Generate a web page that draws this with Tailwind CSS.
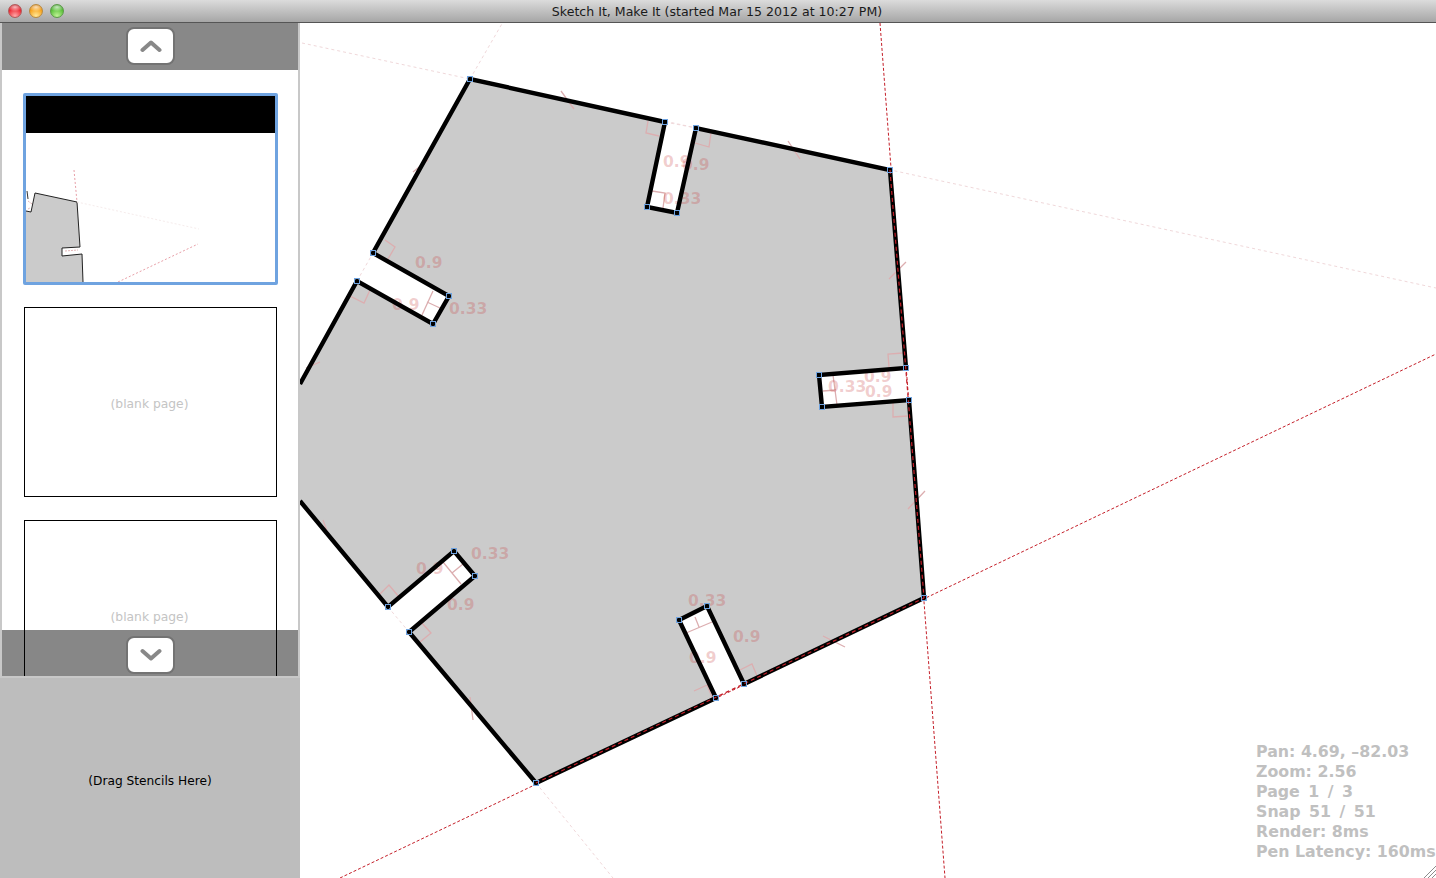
<!DOCTYPE html>
<html>
<head>
<meta charset="utf-8">
<script src="https://cdn.jsdelivr.net/npm/@tailwindcss/browser@4"></script>
</head>
<body class="m-0 overflow-hidden bg-white">
<div class="flex flex-col w-[1436px] h-[878px] overflow-hidden font-['DejaVu_Sans',sans-serif]">
  <!-- Title bar -->
  <div class="relative h-[23px] shrink-0 flex items-center justify-center bg-gradient-to-b from-[#dcdcdc] to-[#a6a6a6] border-b border-[#555555]">
    <div class="absolute left-[8px] top-[4px] flex gap-[7px]">
      <div class="w-[14px] h-[14px] rounded-full border border-[#b05a5a] bg-[radial-gradient(ellipse_60%_35%_at_50%_18%,#ffffffb0,#ffffff00),radial-gradient(circle_at_50%_90%,#ffa8a8,#ee2a34_60%,#b5101a)]"></div>
      <div class="w-[14px] h-[14px] rounded-full border border-[#b88a40] bg-[radial-gradient(ellipse_60%_35%_at_50%_18%,#ffffffb0,#ffffff00),radial-gradient(circle_at_50%_90%,#ffe898,#f7a41e_60%,#c8700c)]"></div>
      <div class="w-[14px] h-[14px] rounded-full border border-[#5c9a48] bg-[radial-gradient(ellipse_60%_35%_at_50%_18%,#ffffffb0,#ffffff00),radial-gradient(circle_at_50%_90%,#c0f296,#5cc13c_60%,#2f8a1e)]"></div>
    </div>
    <span class="text-[12.57px] leading-none text-[#1a1a1a] -ml-[2px] mt-[2px]">Sketch It, Make It (started Mar 15 2012 at 10:27 PM)</span>
  </div>

  <div class="flex flex-1 min-h-0">
    <!-- Sidebar -->
    <div class="w-[300px] shrink-0 flex flex-col bg-[#bdbdbd]">
      <div class="relative h-[655px] shrink-0 overflow-hidden bg-white border-x-2 border-b-2 border-[#c8c8c8]">
        <div class="flex flex-col gap-[23px] pl-[21px] pt-[70px]">
          <!-- Selected thumbnail -->
          <div class="w-[255px] h-[192px] shrink-0 border-[3px] border-[#6fa3e0] rounded-[2px] bg-white overflow-hidden">
            <div class="h-[37px] bg-black"></div>
            <svg class="block" width="249" height="149" viewBox="26 133 249 149">
              <path d="M26 282L83 282L82 254L62 256L62 248L80 247L77 202L35 193L31 212L26 211Z" fill="#cbcbcb"/>
              <path d="M26 211L31 212L35 193L77 202L80 247L62 248L62 256L82 254L83 282" fill="none" stroke="#222222" stroke-width="1"/>
              <path d="M27 191L28 199" stroke="#333333" stroke-width="1"/>
              <path d="M74 170L77 202" stroke="#e8a0a8" stroke-width="1" stroke-dasharray="2 2"/>
              <path d="M77 202L199 229" stroke="#f6ecec" stroke-width="1" stroke-dasharray="2 2"/>
              <path d="M118 282L198 244" stroke="#e8a0a8" stroke-width="1" stroke-dasharray="2 2"/>
              <path d="M65 251L78 250M28 201L32 204M28 209L30 208" stroke="#e3b6b8" stroke-width="1" stroke-dasharray="2 1"/>
            </svg>
          </div>
          <!-- Blank pages -->
          <div class="-mt-[1px] ml-[1px] w-[253px] h-[190px] shrink-0 border border-black flex items-center justify-center pt-[5px] pr-[2px]">
            <span class="text-[12.3px] text-[#c4c4c4]">(blank page)</span>
          </div>
          <div class="ml-[1px] w-[253px] h-[190px] shrink-0 border border-black flex items-center justify-center pt-[5px] pr-[2px]">
            <span class="text-[12.3px] text-[#c4c4c4]">(blank page)</span>
          </div>
        </div>
        <!-- Scroll up -->
        <div class="absolute left-0 right-0 top-0 h-[47px] bg-[#888888] flex items-center justify-center">
          <div class="w-[49px] h-[38px] -mt-[1px] ml-[1px] rounded-[8px] bg-white border-2 border-[#737373] flex items-center justify-center">
            <svg width="22" height="14" viewBox="0 0 22 14"><path d="M2.5 11L11 3.5L19.5 11" fill="none" stroke="#888888" stroke-width="4" stroke-linecap="round" stroke-linejoin="round"/></svg>
          </div>
        </div>
        <!-- Scroll down -->
        <div class="absolute left-0 right-0 bottom-0 h-[46px] bg-black/[.47] flex items-center justify-center">
          <div class="w-[49px] h-[38px] mt-[3px] ml-[1px] rounded-[8px] bg-white border-2 border-[#737373] flex items-center justify-center">
            <svg width="22" height="14" viewBox="0 0 22 14"><path d="M2.5 3L11 10.5L19.5 3" fill="none" stroke="#888888" stroke-width="4" stroke-linecap="round" stroke-linejoin="round"/></svg>
          </div>
        </div>
      </div>
      <div class="flex-1 flex items-center justify-center pt-[7px]">
        <span class="text-[12.2px] text-black">(Drag Stencils Here)</span>
      </div>
    </div>

    <!-- Canvas -->
    <div class="relative flex-1 overflow-hidden bg-white">
      <svg class="absolute inset-0" width="1136" height="855" viewBox="300 23 1136 855">
        <path fill="#cbcbcb" d="M470 79L665 122L647 207L677 213L696 128L890 170L906 368L819 375L822 407L909 400L924 598L744 684L707 606L679 620L716 698L536 783L409 632L475 576L454 551L388 607L300 501L300 384L357 281L433 324L449 296L373 253Z"/>

        <!-- Construction lines -->
        <g fill="none" stroke="#c41e28" stroke-width="1" stroke-dasharray="3 2">
          <path d="M880 23L945 878"/>
          <path d="M340 878L1436 354"/>
        </g>
        <g fill="none" stroke="#f0d8da" stroke-width="1" stroke-dasharray="3 3">
          <path d="M302 43L470 79L1436 288"/>
          <path d="M470 79L503 22"/>
          <path d="M536 783L613 878"/>
          <path d="M388 607L409 632"/>
          <path d="M357 281L373 253"/>
          <path d="M665 122L696 128"/>
        </g>

        <!-- Tick marks and right-angle markers -->
        <g fill="none" stroke="#dcaeb0" stroke-width="1.3">
          <path d="M561 91L574 109M788 141L800 159M889 279L906 262M908 509L925 491M823 636L845 647M615 746L637 737M470 697L473 720M323 520L327 531M306 368L320 362M413 172L428 160"/>
          <path d="M648 121L646 133L659 136M711 133L709 147L695 143M652 191L665 193L663 208"/>
          <path d="M385 240L395 247L388 259M350 296L364 303L370 290M422 315L433 291M427 302L440 308"/>
          <path d="M889 367L888 354L903 353M893 403L893 417L908 416M823 391L836 390M833 375L837 405"/>
          <path d="M380 594L389 585L399 597M420 642L431 633L421 622M443 562L461 584M452 573L463 564"/>
          <path d="M694 691L707 685L712 697M740 670L752 664L757 676M686 633L712 622M695 617L699 627"/>
        </g>

        <!-- Dimension labels -->
        <g class="font-['DejaVu_Sans',sans-serif] font-bold" font-size="15.5" fill="#c83c3c" fill-opacity="0.26">
          <text x="663" y="167">0.9</text><text x="682" y="170">0.9</text><text x="663" y="204">0.33</text>
          <text x="415" y="268">0.9</text><text x="392" y="310">0.9</text><text x="449" y="314">0.33</text>
          <text x="828" y="392">0.33</text><text x="864" y="382">0.9</text><text x="865" y="397">0.9</text>
          <text x="471" y="559">0.33</text><text x="416" y="574">0.9</text><text x="447" y="610">0.9</text>
          <text x="688" y="606">0.33</text><text x="733" y="642">0.9</text><text x="689" y="663">0.9</text>
        </g>

        <!-- Outline -->
        <g fill="none" stroke="#000000" stroke-width="4.4" stroke-linejoin="miter">
          <path d="M300 384L357 281L433 324L449 296L373 253L470 79L665 122L647 207L677 213L696 128L890 170L906 368L819 375L822 407L909 400L924 598L744 684L707 606L679 620L716 698L536 783L409 632L475 576L454 551L388 607L300 501"/>
        </g>
        <g fill="none" stroke="#c41e28" stroke-width="1.2" stroke-dasharray="4 3">
          <path d="M890 170L924 598"/>
          <path d="M536 783L924 598"/>
        </g>

        <!-- Vertex handles -->
        <g fill="none" stroke="#6fa3e0" stroke-width="1" transform="translate(-0.5 -0.5)">
          <rect x="468" y="77" width="5" height="5"/><rect x="663" y="120" width="5" height="5"/><rect x="645" y="205" width="5" height="5"/><rect x="675" y="211" width="5" height="5"/><rect x="694" y="126" width="5" height="5"/><rect x="888" y="168" width="5" height="5"/><rect x="904" y="366" width="5" height="5"/><rect x="817" y="373" width="5" height="5"/><rect x="820" y="405" width="5" height="5"/><rect x="907" y="398" width="5" height="5"/><rect x="922" y="596" width="5" height="5"/><rect x="742" y="682" width="5" height="5"/><rect x="705" y="604" width="5" height="5"/><rect x="677" y="618" width="5" height="5"/><rect x="714" y="696" width="5" height="5"/><rect x="534" y="781" width="5" height="5"/><rect x="407" y="630" width="5" height="5"/><rect x="473" y="574" width="5" height="5"/><rect x="452" y="549" width="5" height="5"/><rect x="386" y="605" width="5" height="5"/><rect x="355" y="279" width="5" height="5"/><rect x="431" y="322" width="5" height="5"/><rect x="447" y="294" width="5" height="5"/><rect x="371" y="251" width="5" height="5"/>
        </g>

        <!-- Resize grip -->
        <path d="M1424 878L1436 866M1428 878L1436 870M1432 878L1436 874" stroke="#8c8c8c" stroke-width="1"/>
      </svg>

      <!-- Stats overlay -->
      <div class="absolute left-[956px] top-[719px] whitespace-nowrap font-bold text-[15.8px] leading-[20px] text-[#c0c0c0]">
        <div>Pan: 4.69, –82.03</div>
        <div>Zoom: 2.56</div>
        <div class="[word-spacing:3px]">Page 1 / 3</div>
        <div class="[word-spacing:3px]">Snap 51 / 51</div>
        <div>Render: 8ms</div>
        <div>Pen Latency: 160ms</div>
      </div>
    </div>
  </div>
</div>
</body>
</html>
